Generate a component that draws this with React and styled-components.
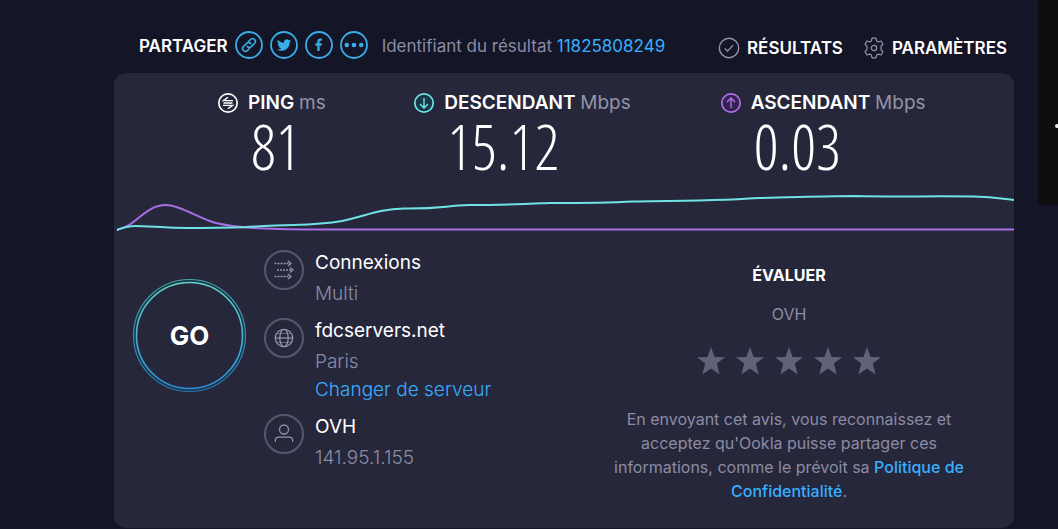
import React from "react";
import styled, { createGlobalStyle } from "styled-components";

const GlobalStyle = createGlobalStyle`
  * {
    box-sizing: border-box;
  }
  body {
    margin: 0;
    background-color: #141526;
    color: white;
    font-family: Inter, "Liberation Sans", sans-serif;
  }
  a {
    color: inherit;
    text-decoration: none;
  }
  button {
    padding: 0;
    border: none;
    background: none;
    color: inherit;
    font-family: inherit;
    cursor: pointer;
  }
`;

const Page = styled.div`
  display: flex;
  align-items: flex-start;
  min-height: 100vh;
`;

const Main = styled.main`
  flex: 1;
  padding: 0 24px 0 114px;
`;

const Ad = styled.aside`
  width: 20px;
  height: 205px;
  background-color: #0e0e0e;
  overflow: hidden;
`;

const AdDot = styled.div`
  width: 4px;
  height: 4px;
  margin: 124px 0 0 17px;
  border-radius: 50%;
  background-color: #e8e8e8;
`;

const Header = styled.header`
  display: flex;
  align-items: center;
  justify-content: space-between;
  padding: 27px 7px 4px 25px;
  height: 73px;
`;

const Share = styled.div`
  display: flex;
  align-items: center;
  padding-bottom: 6px;
`;

const ShareTitle = styled.span`
  padding-top: 2px;
  font-size: 17px;
  font-weight: 600;
  line-height: 20px;
`;

const ShareIcons = styled.div`
  display: flex;
  gap: 7px;
  margin: 0 14px 0 7px;
`;

const ShareButton = styled.button`
  display: flex;
  width: 28px;
  height: 28px;
  color: #38aee8;
`;

const Result = styled.span`
  padding-top: 2px;
  color: #8b8ca4;
  font-size: 17px;
  line-height: 20px;
  white-space: nowrap;
`;

const Link = styled.a`
  color: #38aeff;
`;

const Nav = styled.nav`
  display: flex;
  gap: 20px;
`;

const NavLink = styled.a`
  display: flex;
  align-items: center;
  gap: 7px;
  font-size: 17px;
  font-weight: 600;
  line-height: 20px;

  svg {
    color: #9193a8;
  }
`;

const Panel = styled.section`
  border-radius: 12px;
  background-color: #26273b;
  padding-bottom: 25px;
`;

const Stats = styled.div`
  display: grid;
  grid-template-columns: 196fr 306fr 294fr;
  padding: 18px 0 0 103px;
`;

const StatLabel = styled.div`
  display: flex;
  align-items: center;
  gap: 9px;
  font-size: 19px;
  font-weight: 600;
  line-height: 24px;
  white-space: nowrap;
`;

const Unit = styled.span`
  color: #9193a8;
  font-weight: 400;
`;

const StatValue = styled.div`
  padding: 0 0 6px 34px;
  font-family: "Open Sans Condensed Light", "Roboto Condensed", Roboto, sans-serif;
  font-size: 62px;
  font-weight: 200;
  line-height: 62px;
`;

const Chart = styled.svg`
  display: block;
  width: 100%;
  height: 52px;
`;

const Bottom = styled.div`
  display: grid;
  grid-template-columns: 450fr 450fr;
`;

const Left = styled.div`
  display: flex;
  align-items: flex-start;
  gap: 16px;
  padding: 17px 0 0 18px;
`;

const GoButton = styled.button`
  display: flex;
  flex-shrink: 0;
  margin-top: 26px;
`;

const GoText = styled.text`
  font-size: 26px;
  font-weight: 700;
`;

const Details = styled.div`
  display: flex;
  flex-direction: column;
  gap: 12px;
`;

const Detail = styled.div`
  display: flex;
  gap: 10px;
`;

const DetailIcon = styled.svg`
  flex-shrink: 0;
  margin-top: -3px;
  color: #9193a8;
`;

const DetailText = styled.div`
  display: flex;
  flex-direction: column;
  font-size: 19px;
  line-height: 28px;
  font-weight: 300;
`;

const Name = styled.span`
  font-weight: 400;
  line-height: 34px;
  margin-top: -6px;
`;

const Value = styled.span`
  color: #8b8ca4;
`;

const Rate = styled.div`
  display: flex;
  flex-direction: column;
  align-items: center;
  padding-top: 30px;
`;

const RateTitle = styled.h2`
  margin: 0;
  font-size: 16px;
  font-weight: 700;
  line-height: 20px;
`;

const Provider = styled.span`
  margin-top: 19px;
  color: #8b8ca4;
  font-size: 16px;
  line-height: 20px;
`;

const Stars = styled.div`
  display: flex;
  gap: 11px;
  margin: 23px 0 32px;
`;

const Star = styled.button`
  display: flex;
  color: #60627a;
`;

const Notice = styled.p`
  max-width: 376px;
  margin: 0;
  color: #8b8ca4;
  font-size: 16px;
  line-height: 24px;
  text-align: center;

  a {
    font-weight: 500;
  }
`;

const STATS = [
  {
    name: "PING",
    unit: "ms",
    value: "81",
    color: "#ffffff",
    fill: "none",
    path: "M16 8.6H6.5L11 5.3M6.5 11H15.5M6 13.4H15.5L11 16.7",
  },
  { name: "DESCENDANT", unit: "Mbps", value: "15.12", color: "#6be7e5", fill: "#193744", path: "M11 6v10M7 12l4 4 4-4" },
  { name: "ASCENDANT", unit: "Mbps", value: "0.03", color: "#b36ef0", fill: "#33254f", path: "M11 16V6M7 10l4-4 4 4" },
];

function ShareIcon({ label, children }) {
  return (
    <ShareButton type="button" aria-label={label}>
      <svg width="28" height="28" viewBox="0 0 28 28" fill="none" stroke="currentColor">
        <circle cx="14" cy="14" r="13" strokeWidth="1.8" />
        {children}
      </svg>
    </ShareButton>
  );
}

function Stat({ stat }) {
  return (
    <div>
      <StatLabel>
        <svg width="22" height="22" viewBox="0 0 22 22" fill="none" stroke={stat.color} strokeWidth="1.7">
          <circle cx="11" cy="11" r="9.2" fill={stat.fill} />
          <path d={stat.path} strokeWidth="1.4" />
        </svg>
        <span>
          {stat.name} <Unit>{stat.unit}</Unit>
        </span>
      </StatLabel>
      <StatValue>{stat.value}</StatValue>
    </div>
  );
}

function DetailRow({ icon, name, value, children }) {
  return (
    <Detail>
      <DetailIcon width="42" height="42" viewBox="0 0 42 42" fill="none" stroke="currentColor" strokeWidth="1.3">
        <circle cx="21" cy="21" r="19" stroke="#56586d" strokeWidth="2" />
        {icon}
      </DetailIcon>
      <DetailText>
        <Name>{name}</Name>
        <Value>{value}</Value>
        {children}
      </DetailText>
    </Detail>
  );
}

function App() {
  return (
    <Page>
      <GlobalStyle />
      <Main>
        <Header>
          <Share>
            <ShareTitle>PARTAGER</ShareTitle>
            <ShareIcons>
              <ShareIcon label="Lien">
                <g transform="rotate(-45 14 14)" strokeWidth="1.6">
                  <path d="M12.5 16.8H9a2.8 2.8 0 0 1 0-5.6h4.5a2.8 2.8 0 0 1 2.6 3.8" />
                  <path d="M15.5 11.2H19a2.8 2.8 0 0 1 0 5.6h-4.5a2.8 2.8 0 0 1-2.6-3.8" />
                </g>
              </ShareIcon>
              <ShareIcon label="Twitter">
                <path
                  transform="translate(7 7) scale(0.59)"
                  fill="currentColor"
                  stroke="none"
                  d="M23.95 4.57a10 10 0 0 1-2.82.77 4.96 4.96 0 0 0 2.16-2.72c-.95.55-2 .96-3.13 1.18a4.92 4.92 0 0 0-8.38 4.48C7.69 8.1 4.07 6.13 1.64 3.16a4.92 4.92 0 0 0 1.52 6.57 4.9 4.9 0 0 1-2.23-.61v.06a4.92 4.92 0 0 0 3.95 4.83 5 5 0 0 1-2.21.08 4.94 4.94 0 0 0 4.6 3.42A9.87 9.87 0 0 1 0 19.54a14 14 0 0 0 7.55 2.21c9.05 0 14-7.5 14-13.98 0-.21 0-.42-.02-.63a9.9 9.9 0 0 0 2.42-2.57z"
                />
              </ShareIcon>
              <ShareIcon label="Facebook">
                <path
                  fill="currentColor"
                  stroke="none"
                  d="M12.3 20v-5.2H10.4v-2.5h1.9v-1.6c0-2 1.1-3.1 2.9-3.1.8 0 1.5.1 1.7.1v2.1h-1.2c-.9 0-1.1.5-1.1 1.1v1.4h2.2l-.3 2.5h-1.9V20z"
                />
              </ShareIcon>
              <ShareIcon label="Plus">
                <g fill="currentColor" stroke="none">
                  <circle cx="6.8" cy="14" r="2.3" />
                  <circle cx="14" cy="14" r="2.3" />
                  <circle cx="21.2" cy="14" r="2.3" />
                </g>
              </ShareIcon>
            </ShareIcons>
            <Result>
              Identifiant du résultat <Link href="#result">11825808249</Link>
            </Result>
          </Share>
          <Nav>
            <NavLink href="#results">
              <svg width="22" height="22" viewBox="0 0 22 22" fill="none" stroke="currentColor" strokeWidth="1.4">
                <circle cx="11" cy="11" r="9.7" />
                <path d="M6.8 11.4l2.8 2.7 5.4-6" />
              </svg>
              RÉSULTATS
            </NavLink>
            <NavLink href="#settings">
              <svg width="22" height="22" viewBox="0 0 22 22" fill="none" stroke="currentColor" strokeWidth="1.2" strokeLinejoin="round">
                <path d="M9 1.2h4l.6 2.7 1.7 1 2.7-.9 2 3.4-2 1.9v3.4l2 1.9-2 3.4-2.7-.9-1.7 1-.6 2.7H9l-.6-2.7-1.7-1-2.7.9-2-3.4 2-1.9V9.3l-2-1.9L4 4l2.7.9 1.7-1z" />
                <circle cx="11" cy="11" r="2.7" />
              </svg>
              PARAMÈTRES
            </NavLink>
          </Nav>
        </Header>
        <Panel>
          <Stats>
            {STATS.map((stat) => (
              <Stat key={stat.name} stat={stat} />
            ))}
          </Stats>
          <Chart viewBox="0 0 900 52" preserveAspectRatio="none" fill="none" strokeWidth="2">
            <path
              stroke="#a56fe6"
              d="M3 47C8 45 13 44 18 40C30 31 38 22 52 22C66 22 84 35 102 40C122 45 150 46 200 46.5H900"
            />
            <path
              stroke="#6fe3e3"
              d="M3 47C9 45 12 43 20 43C36 43 50 45 75 45C100 45 125 45 150 43C180 41 200 43 228 38C252 33 265 26 290 25.5C325 26 330 23 355 22C390 22 410 21 435 20C460 20 490 20 520 18.5C560 18 600 18 645 15C690 14 710 13 740 13C780 14 810 13 860 13.5C880 14 890 16 900 17"
            />
          </Chart>
          <Bottom>
            <Left>
              <GoButton type="button">
                <svg width="115" height="115" viewBox="0 0 115 115" fill="none">
                  <defs>
                    <linearGradient id="ring" x1="0" y1="0" x2="0" y2="1">
                      <stop offset="0" stopColor="#63d5ca" />
                      <stop offset="1" stopColor="#2d8fdd" />
                    </linearGradient>
                  </defs>
                  <circle cx="57.5" cy="57.5" r="54.5" stroke="#17384b" strokeWidth="3" />
                  <circle cx="57.5" cy="57.5" r="56" stroke="url(#ring)" strokeWidth="1.2" opacity="0.7" />
                  <circle cx="57.5" cy="57.5" r="53" stroke="url(#ring)" strokeWidth="1.6" />
                  <GoText x="57.5" y="67" fill="white" textAnchor="middle">
                    GO
                  </GoText>
                </svg>
              </GoButton>
              <Details>
                <DetailRow
                  name="Connexions"
                  value="Multi"
                  icon={
                    <>
                      <path d="M11.5 14.5H27M14 21H29M11.5 27.5H27" strokeDasharray="2 1" />
                      <path d="M25 12l3 2.5-3 2.5M27 18.5l3 2.5-3 2.5M25 25l3 2.5-3 2.5" />
                    </>
                  }
                />
                <DetailRow
                  name="fdcservers.net"
                  value="Paris"
                  icon={
                    <>
                      <circle cx="21" cy="21" r="8.7" />
                      <ellipse cx="21" cy="21" rx="4.2" ry="8.7" />
                      <path d="M12.3 21h17.4" />
                      <path d="M14 16.5h14M14 25.5h14" strokeWidth="0.6" />
                    </>
                  }
                >
                  <Link href="#servers">Changer de serveur</Link>
                </DetailRow>
                <DetailRow
                  name="OVH"
                  value="141.95.1.155"
                  icon={
                    <>
                      <circle cx="21" cy="16.5" r="4.5" />
                      <path d="M12.3 29v-1.2c0-2.2 1.5-3.6 3.7-3.6h10c2.2 0 3.7 1.4 3.7 3.6V29" />
                    </>
                  }
                />
              </Details>
            </Left>
            <Rate>
              <RateTitle>ÉVALUER</RateTitle>
              <Provider>OVH</Provider>
              <Stars>
                {[1, 2, 3, 4, 5].map((n) => (
                  <Star key={n} type="button" aria-label={`${n} sur 5`}>
                    <svg width="28" height="28" viewBox="0 0 28 28" fill="currentColor">
                      <path d="M14 0l3.6 9.9 10.4.3-8.2 6.4 2.9 10.9L14 21.5l-8.7 6 2.9-10.9L0 10.2l10.4-.3z" />
                    </svg>
                  </Star>
                ))}
              </Stars>
              <Notice>
                En envoyant cet avis, vous reconnaissez et acceptez qu'Ookla puisse partager ces informations, comme le
                prévoit sa <Link href="#privacy">Politique de Confidentialité</Link>.
              </Notice>
            </Rate>
          </Bottom>
        </Panel>
      </Main>
      <Ad>
        <AdDot />
      </Ad>
    </Page>
  );
}

export default App;
